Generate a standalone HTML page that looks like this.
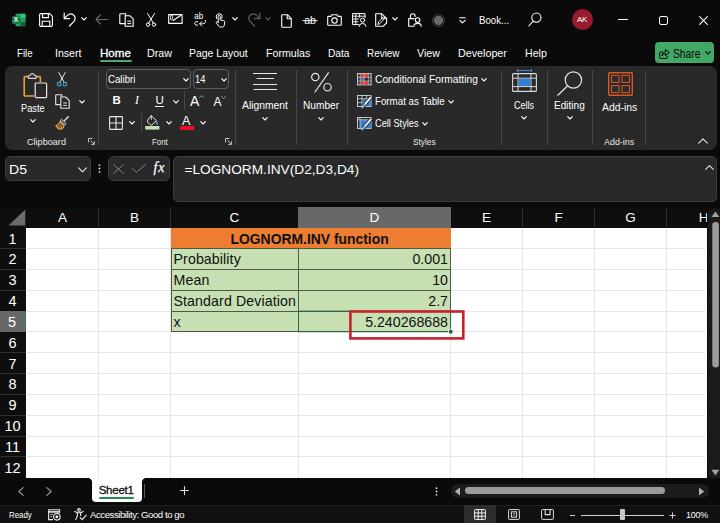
<!DOCTYPE html>
<html lang="en">
<head>
<meta charset="utf-8">
<title>Book1 - Excel</title>
<style>
*{box-sizing:border-box;margin:0;padding:0}
html,body{width:720px;height:523px;overflow:hidden;background:#0a0a0a}
body{position:relative;font-family:"Liberation Sans",sans-serif;color:#fff;font-size:12px}
.abs{position:absolute}
.t{position:absolute;white-space:nowrap;line-height:1;transform-origin:0 50%}
svg{position:absolute;overflow:visible}
/* menu */
.menu{font-size:11.6px;top:47px;color:#fff}
/* ribbon */
#ribbon{position:absolute;left:5px;top:65.5px;width:711.5px;height:84px;background:#292929;border-radius:7px}
.rl{font-size:11px;color:#fff}
.gl{font-size:9.8px;color:#e8e8e8}
.sep{position:absolute;width:1px;background:#474747}
.cb{border:1px solid #5c5c5c;border-radius:4px;background:#292929}
/* formula bar */
.fbox{position:absolute;background:#292929;border:1px solid #3c3c3c;border-radius:5px}
.st{font-size:9.7px;color:#fff}
/* grid */
#grid{position:absolute;left:0;top:207px;width:720px;height:271px;overflow:hidden}
.ch{position:absolute;top:0;height:21px;color:#fff;font-size:13.5px;text-align:center;line-height:22px}
.chs{background:#686868}
.chs1{position:absolute;top:1px;width:1px;height:20px;background:#2e2e2e}
.rh{position:absolute;left:0;width:26px;padding-right:1px;background:#0e0e0e;color:#fff;font-size:14.5px;text-align:center;line-height:23px}
.rhs{background:#686868;border-right:1px solid #2a7a4f}
.rhs1{position:absolute;left:0;width:26px;height:1px;background:#2e2e2e}
.vl{position:absolute;top:21px;width:1px;height:250px;background:#e6e6e6}
.hl{position:absolute;left:26px;height:1px;width:679px;background:#e6e6e6}
.bh{position:absolute;left:171px;width:280px;height:1px;background:#4a5a44}
.bv{position:absolute;top:41px;width:1px;height:84px;background:#4a5a44}
.r{letter-spacing:0 !important}
.cell{position:absolute;font-size:14.2px;color:#111;white-space:nowrap;line-height:1;letter-spacing:0.1px}
</style>
</head>
<body>

<!-- ============ TITLE BAR ============ -->
<div id="titlebar">
  <!-- excel logo -->
  <svg style="left:12px;top:13px" width="14" height="14" viewBox="0 0 14 14">
    <rect x="3.5" y="0.7" width="10" height="12.6" rx="1" fill="#21a366"/>
    <rect x="8.5" y="0.7" width="5" height="4.2" fill="#33c481"/>
    <rect x="3.5" y="4.9" width="5" height="4.2" fill="#107c41"/>
    <rect x="8.5" y="9.1" width="5" height="4.2" fill="#185c37"/>
    <rect x="0" y="3.3" width="7.6" height="7.6" rx="0.8" fill="#107c41"/>
    <text x="3.8" y="9.4" font-size="6.5" font-weight="bold" fill="#fff" text-anchor="middle" font-family="Liberation Sans, sans-serif">X</text>
  </svg>
  <!-- save -->
  <svg style="left:39px;top:13px" width="14" height="14" viewBox="0 0 14 14" fill="none" stroke="#fff" stroke-width="1.1">
    <path d="M0.6 2.1Q0.6 0.6 2.1 0.6H10.6L13.4 3.4V11.9Q13.4 13.4 11.9 13.4H2.1Q0.6 13.4 0.6 11.9Z"/>
    <path d="M3.6 0.8V4.6H9.4V0.8"/>
    <path d="M3.2 13.2V8.2H10.8V13.2"/>
  </svg>
  <!-- undo -->
  <svg style="left:63px;top:12px" width="14" height="15" viewBox="0 0 14 15" fill="none" stroke="#fff" stroke-width="1.2" stroke-linecap="round" stroke-linejoin="round">
    <path d="M1.2 1.2V6.6H6.6"/>
    <path d="M1.4 6.4L4.6 3.2Q7.6 0.6 10.6 3Q13.6 6 10.8 9.6L6.4 14"/>
  </svg>
  <svg style="left:81px;top:17px" width="6" height="4" viewBox="0 0 6 4" fill="none" stroke="#fff" stroke-width="1.1" stroke-linecap="round" stroke-linejoin="round"><path d="M0.7 0.7L3 3L5.3 0.7"/></svg>
  <!-- back arrow (disabled) -->
  <svg style="left:95px;top:14px" width="14" height="11" viewBox="0 0 14 11" fill="none" stroke="#6a6a6a" stroke-width="1.1" stroke-linecap="round" stroke-linejoin="round">
    <path d="M13 5.5H1M5.4 1L1 5.5L5.4 10"/>
  </svg>
  <!-- paste/copy doc -->
  <svg style="left:118.5px;top:13px" width="15" height="14" viewBox="0 0 15 14" fill="none" stroke="#fff" stroke-width="1.1" stroke-linejoin="round">
    <path d="M6 10.6H0.8V1.4Q0.8 0.7 1.5 0.7H6.6V3"/>
    <path d="M6.2 2.8H11L14.2 5.8V13.3H6.2Z" fill="#0a0a0a"/>
    <path d="M8.3 8.2H12.2M8.3 10.6H12.2" stroke-width="1"/>
  </svg>
  <!-- scissors -->
  <svg style="left:146px;top:13px" width="10" height="14" viewBox="0 0 10 14" fill="none" stroke="#fff" stroke-width="1" stroke-linecap="round">
    <path d="M1.6 0.6L7.4 10.2M8.4 0.6L2.6 10.2"/>
    <circle cx="2" cy="11.6" r="1.7"/><circle cx="8" cy="11.6" r="1.7"/>
  </svg>
  <!-- signature / pen image icon -->
  <svg style="left:168px;top:13px" width="15" height="13" viewBox="0 0 15 13" fill="none" stroke="#fff" stroke-width="1.1" stroke-linejoin="round" stroke-linecap="round">
    <path d="M0.7 1.6H14.1V10.4H0.7Z"/>
    <path d="M2.6 6.4V3.4Q2.6 2 3.6 2Q4.6 2 4.6 3.4V5.6Q4.6 7 3.6 7" stroke-width="0.9"/>
    <path d="M5.2 7.4L12.6 2.4" stroke-width="1.2"/>
  </svg>
  <!-- ab translate -->
  <svg style="left:193px;top:13px" width="14" height="14" viewBox="0 0 14 14" fill="none" stroke="#fff" stroke-width="0.95" stroke-linecap="round" stroke-linejoin="round">
    <text x="1.2" y="6.4" font-size="8.2" fill="#fff" stroke="none" font-family="Liberation Sans, sans-serif">ab</text>
    <path d="M4.6 8.6Q2 8 1.6 10.4Q2 12.8 4.6 12.2"/>
    <path d="M12.4 7.4Q13.2 10.6 9.6 10.8H6.8M8.8 8.6L6.6 10.8L8.8 13"/>
  </svg>
  <!-- touch -->
  <svg style="left:213.5px;top:12.5px" width="12" height="15" viewBox="0 0 12 15" fill="none" stroke="#fff" stroke-width="1" stroke-linecap="round" stroke-linejoin="round">
    <path d="M4.2 9.4V3.4Q4.2 2.3 5.2 2.3Q6.2 2.3 6.2 3.4V7L9.6 7.6Q10.8 7.9 10.7 9.2L10.2 12.6Q10 14 8.6 14H6.2Q5.2 14 4.6 13L2.4 9.8Q2 9 2.8 8.6Q3.4 8.4 4.2 9.4"/>
    <path d="M2.6 5.6Q1.2 2.6 3.4 1.2Q5.2 0.2 7 1.2Q9 2.6 7.8 5.4"/>
  </svg>
  <svg style="left:232px;top:17px" width="6" height="4" viewBox="0 0 6 4" fill="none" stroke="#fff" stroke-width="1.1" stroke-linecap="round" stroke-linejoin="round"><path d="M0.7 0.7L3 3L5.3 0.7"/></svg>
  <!-- redo (disabled) -->
  <svg style="left:247px;top:12px" width="14" height="15" viewBox="0 0 14 15" fill="none" stroke="#5e5e5e" stroke-width="1.2" stroke-linecap="round" stroke-linejoin="round">
    <path d="M12.8 1.2V6.6H7.4"/>
    <path d="M12.6 6.4L9.4 3.2Q6.4 0.6 3.4 3Q0.4 6 3.2 9.6L7.6 14"/>
  </svg>
  <svg style="left:264.5px;top:17px" width="6" height="4" viewBox="0 0 6 4" fill="none" stroke="#5e5e5e" stroke-width="1.1" stroke-linecap="round" stroke-linejoin="round"><path d="M0.7 0.7L3 3L5.3 0.7"/></svg>
  <!-- new doc -->
  <svg style="left:280.5px;top:13.5px" width="11" height="14" viewBox="0 0 11 14" fill="none" stroke="#fff" stroke-width="1.1" stroke-linejoin="round">
    <path d="M0.7 1.6Q0.7 0.7 1.6 0.7H6.4L10.3 4.6V12.4Q10.3 13.3 9.4 13.3H1.6Q0.7 13.3 0.7 12.4Z"/>
    <path d="M6.2 0.9V4.8H10.1"/>
  </svg>
  <!-- strikethrough ab -->
  <svg style="left:302px;top:14px" width="16" height="12" viewBox="0 0 16 12">
    <text x="2.2" y="9.8" font-size="10.5" fill="#fff" font-family="Liberation Sans, sans-serif">ab</text>
    <path d="M0.4 6.6H15.6" stroke="#fff" stroke-width="0.9"/>
  </svg>
  <!-- camera -->
  <svg style="left:327px;top:13.5px" width="15" height="12" viewBox="0 0 15 12" fill="none" stroke="#fff" stroke-width="1.1" stroke-linejoin="round">
    <path d="M0.7 3.2Q0.7 2.4 1.5 2.4H4L5 0.7H10L11 2.4H13.5Q14.3 2.4 14.3 3.2V10.6Q14.3 11.3 13.5 11.3H1.5Q0.7 11.3 0.7 10.6Z"/>
    <circle cx="7.5" cy="6.6" r="2.7"/>
  </svg>
  <!-- form / table person -->
  <svg style="left:352px;top:13px" width="15" height="14" viewBox="0 0 15 14" fill="none" stroke="#fff" stroke-width="1" stroke-linejoin="round" stroke-linecap="round">
    <path d="M7 11.6H0.6V0.6H13V4.6"/>
    <path d="M0.6 3.2H13M0.6 6H6.6M0.6 8.8H6M3.8 0.6V11.6M7.6 0.6V4.4" stroke-width="0.9"/>
    <circle cx="10.6" cy="7.2" r="2.1"/>
    <path d="M7.2 13.4Q7.4 10.4 10.6 10.4Q13.8 10.4 14 13.4"/>
  </svg>
  <!-- doc with pen -->
  <svg style="left:374.5px;top:13px" width="13" height="14" viewBox="0 0 13 14" fill="none" stroke="#fff" stroke-width="1.1" stroke-linejoin="round" stroke-linecap="round">
    <path d="M0.7 0.7H6.6L11.6 5.4V10L8 13.3H0.7Z"/>
    <path d="M6.4 0.9V5.6H11.2" stroke-width="0.9"/>
    <path d="M3 11.2L3.6 8.8L8.6 3.6L10 5L5 10.4Z" stroke-width="0.9"/>
  </svg>
  <svg style="left:392px;top:17px" width="6" height="4" viewBox="0 0 6 4" fill="none" stroke="#fff" stroke-width="1.1" stroke-linecap="round" stroke-linejoin="round"><path d="M0.7 0.7L3 3L5.3 0.7"/></svg>
  <!-- lock person -->
  <svg style="left:408px;top:13px" width="14" height="14" viewBox="0 0 14 14" fill="none" stroke="#fff" stroke-width="1.1" stroke-linejoin="round" stroke-linecap="round">
    <path d="M2.4 5.4V3.4Q2.4 0.7 4.8 0.7Q7.2 0.7 7.2 3.4"/>
    <path d="M5.4 13.3H0.7V5.6H6"/>
    <circle cx="9.6" cy="7" r="2.3"/>
    <path d="M6 13.3Q6 10.4 9.6 10.4Q13.2 10.4 13.2 13.3"/>
  </svg>
  <!-- record -->
  <svg style="left:431.5px;top:13.5px" width="13" height="13" viewBox="0 0 13 13"><circle cx="6.5" cy="6.5" r="6" fill="none" stroke="#4a4a4a" stroke-width="0.9"/><circle cx="6.5" cy="6.5" r="4.7" fill="#6a6a6a"/></svg>
  <!-- customize QAT -->
  <svg style="left:459px;top:16.5px" width="7" height="7" viewBox="0 0 7 7" fill="none" stroke="#fff" stroke-width="1.1" stroke-linecap="round" stroke-linejoin="round"><path d="M0.8 0.8H6.2"/><path d="M0.9 3.4L3.5 5.9L6.1 3.4"/></svg>
  <span class="t" style="left:479px;top:15px;font-size:11.5px;transform:scaleX(0.843)" id="book">Book...</span>
  <!-- search -->
  <svg style="left:528px;top:12px" width="14" height="15" viewBox="0 0 14 15" fill="none" stroke="#fff" stroke-width="1.1" stroke-linecap="round"><circle cx="8.4" cy="5.6" r="4.6"/><path d="M5.2 9.2L0.8 14"/></svg>
  <!-- avatar -->
  <div class="abs" style="left:571.5px;top:9px;width:21px;height:21px;border-radius:50%;background:#951c2e"></div>
  <span class="t" style="left:577px;top:16px;font-size:8px;letter-spacing:-0.3px" id="ak">AK</span>
  <!-- window controls -->
  <div class="abs" style="left:618px;top:18.5px;width:9.5px;height:1.2px;background:#fff"></div>
  <div class="abs" style="left:658.5px;top:15.5px;width:9px;height:9px;border:1.1px solid #fff;border-radius:2px"></div>
  <svg style="left:699px;top:15.5px" width="9" height="9" viewBox="0 0 9 9" stroke="#fff" stroke-width="1.1" stroke-linecap="round"><path d="M0.6 0.6L8.4 8.4M8.4 0.6L0.6 8.4"/></svg>
</div>

<!-- ============ MENU ============ -->
<div id="menu">
  <span class="t menu" style="left:16.5px;transform:scaleX(0.837)" id="m1">File</span>
  <span class="t menu" style="left:55.4px;transform:scaleX(0.912)" id="m2">Insert</span>
  <span class="t menu" style="left:100px;-webkit-text-stroke:0.3px #fff" id="m3">Home</span>
  <div class="abs" style="left:100px;top:60px;width:31.5px;height:2px;background:#4ea86f;border-radius:1px"></div>
  <span class="t menu" style="left:147px;transform:scaleX(0.929)" id="m4">Draw</span>
  <span class="t menu" style="left:189px;transform:scaleX(0.902)" id="m5">Page Layout</span>
  <span class="t menu" style="left:266.4px;transform:scaleX(0.918)" id="m6">Formulas</span>
  <span class="t menu" style="left:327.5px;transform:scaleX(0.879)" id="m7">Data</span>
  <span class="t menu" style="left:367px;transform:scaleX(0.856)" id="m8">Review</span>
  <span class="t menu" style="left:417px;transform:scaleX(0.92)" id="m9">View</span>
  <span class="t menu" style="left:457.5px;transform:scaleX(0.925)" id="m10">Developer</span>
  <span class="t menu" style="left:525px;transform:scaleX(0.917)" id="m11">Help</span>
  <div class="abs" style="left:655px;top:42px;width:59px;height:20.5px;border-radius:4px;background:#41a866"></div>
  <svg style="left:658.5px;top:48.5px" width="11" height="10" viewBox="0 0 11 10" fill="none" stroke="#0a0a0a" stroke-width="1" stroke-linejoin="round" stroke-linecap="round">
    <path d="M3.4 3H1.6Q0.6 3 0.6 4V8.4Q0.6 9.4 1.6 9.4H7.4Q8.4 9.4 8.4 8.4V7.4"/>
    <path d="M6.6 0.6L10.4 3.6L6.6 6.6V4.8Q4 4.6 2.8 7Q3 3 6.6 2.6Z"/>
  </svg>
  <span class="t" style="left:673px;top:47.5px;font-size:12px;color:#0a0a0a;transform:scaleX(0.858)" id="share">Share</span>
  <svg style="left:704.5px;top:51px" width="6" height="4" viewBox="0 0 6 4" fill="none" stroke="#0a0a0a" stroke-width="1.1" stroke-linecap="round" stroke-linejoin="round"><path d="M0.7 0.7L3 3L5.3 0.7"/></svg>
</div>

<!-- ============ RIBBON ============ -->
<div id="ribbon"></div>
<div id="rib">
  <!-- Clipboard group -->
  <svg style="left:22.5px;top:73px" width="25" height="26" viewBox="0 0 25 26" fill="none">
    <path d="M6 3.6H2.2Q1.2 3.6 1.2 4.6V22Q1.2 23 2.2 23H11" stroke="#e8a33d" stroke-width="1.6"/>
    <path d="M12.6 3.6H16.4Q17.4 3.6 17.4 4.6V9" stroke="#e8a33d" stroke-width="1.6"/>
    <path d="M5.6 5.4V3Q5.6 2.2 6.4 2.2H7.4Q7.6 0.6 9.3 0.6Q11 0.6 11.2 2.2H12.2Q13 2.2 13 3V5.4Z" stroke="#d6d6d6" stroke-width="1.1" fill="#292929"/>
    <rect x="12.2" y="10" width="11.4" height="14.6" rx="0.8" stroke="#e6e6e6" stroke-width="1.2" fill="#292929"/>
  </svg>
  <span class="t rl" style="left:21.4px;top:102.5px;transform:scaleX(0.839)" id="paste">Paste</span>
  <svg style="left:29.5px;top:118.5px" width="6" height="4" viewBox="0 0 6 4" fill="none" stroke="#fff" stroke-width="1.1" stroke-linecap="round" stroke-linejoin="round"><path d="M0.7 0.7L3 3L5.3 0.7"/></svg>
  <!-- cut -->
  <svg style="left:57px;top:72px" width="10" height="15" viewBox="0 0 10 15" fill="none" stroke-linecap="round">
    <path d="M1.8 0.6L7.2 10.4M8.2 0.6L2.8 10.4" stroke="#e6e6e6" stroke-width="1"/>
    <circle cx="2.1" cy="12.2" r="1.8" stroke="#4da3e0" stroke-width="1.1"/><circle cx="7.9" cy="12.2" r="1.8" stroke="#4da3e0" stroke-width="1.1"/>
  </svg>
  <!-- copy -->
  <svg style="left:55px;top:93.5px" width="15" height="15" viewBox="0 0 15 15" fill="none" stroke="#e6e6e6" stroke-width="1.1" stroke-linejoin="round">
    <path d="M5.6 10.6H0.7V1.4Q0.7 0.7 1.4 0.7H6.8V3"/>
    <path d="M5.8 3H10.6L14.2 6.4V14.2H5.8Z" fill="#292929"/>
    <path d="M8.2 9H12M8.2 11.4H12" stroke-width="0.9"/>
  </svg>
  <svg style="left:79px;top:99.5px" width="6" height="4" viewBox="0 0 6 4" fill="none" stroke="#fff" stroke-width="1.1" stroke-linecap="round" stroke-linejoin="round"><path d="M0.7 0.7L3 3L5.3 0.7"/></svg>
  <!-- format painter -->
  <svg style="left:55px;top:116px" width="15" height="14" viewBox="0 0 15 14" fill="none" stroke-linejoin="round" stroke-linecap="round">
    <path d="M9.4 4.8L13.2 0.8" stroke="#e6e6e6" stroke-width="1.3"/>
    <path d="M6.8 3.6L11 7.6L9.6 9L5.4 5Z" stroke="#e6e6e6" stroke-width="1" fill="#292929"/>
    <path d="M5 5.6L9 9.6Q8.6 12.8 5.2 13.2Q2.4 12.6 0.8 10Q3.6 8.8 5 5.6Z" stroke="#e8a33d" stroke-width="1.1" fill="#e8a33d" fill-opacity="0.35"/>
    <path d="M3.4 10.8L4.6 12.4M5.4 9.6L6.6 11.6" stroke="#e8a33d" stroke-width="0.8"/>
  </svg>
  <span class="t gl" style="left:27px;top:136.5px;transform:scaleX(0.929)" id="g1">Clipboard</span>
  <svg style="left:88px;top:138px" width="7" height="7" viewBox="0 0 7 7" fill="none" stroke="#d0d0d0" stroke-width="0.9"><path d="M0.5 4.5V0.5H4.5"/><path d="M2.6 2.6L6.2 6.2M6.4 3.2V6.4H3.2"/></svg>
  <div class="sep" style="left:98px;top:70px;height:75px"></div>

  <!-- Font group -->
  <div class="abs cb" style="left:105.5px;top:68.5px;width:85.5px;height:20.5px"></div>
  <span class="t" style="left:107.5px;top:74px;font-size:11px;transform:scaleX(0.88)" id="fname">Calibri</span>
  <svg style="left:182.5px;top:77.5px" width="6" height="4" viewBox="0 0 6 4" fill="none" stroke="#fff" stroke-width="1.1" stroke-linecap="round" stroke-linejoin="round"><path d="M0.7 0.7L3 3L5.3 0.7"/></svg>
  <div class="abs cb" style="left:192.5px;top:68.5px;width:36.5px;height:20.5px"></div>
  <span class="t" style="left:195px;top:74px;font-size:11px;transform:scaleX(0.84)" id="fsize">14</span>
  <svg style="left:221px;top:77.5px" width="6" height="4" viewBox="0 0 6 4" fill="none" stroke="#fff" stroke-width="1.1" stroke-linecap="round" stroke-linejoin="round"><path d="M0.7 0.7L3 3L5.3 0.7"/></svg>
  <span class="t" style="left:112.5px;top:95px;font-size:11.5px;font-weight:bold" id="bb">B</span>
  <span class="t" style="left:135px;top:95px;font-size:11.5px;font-style:italic;font-family:'Liberation Serif',serif" id="ii">I</span>
  <span class="t" style="left:155.5px;top:95px;font-size:11.5px" id="uu">U</span>
  <div class="abs" style="left:155px;top:106px;width:8.5px;height:1px;background:#fff"></div>
  <svg style="left:172.5px;top:99.5px" width="6" height="4" viewBox="0 0 6 4" fill="none" stroke="#fff" stroke-width="1.1" stroke-linecap="round" stroke-linejoin="round"><path d="M0.7 0.7L3 3L5.3 0.7"/></svg>
  <div class="sep" style="left:184px;top:91px;height:19px"></div>
  <span class="t" style="left:190px;top:93.5px;font-size:14px" id="agrow">A</span>
  <svg style="left:199px;top:95px" width="5" height="3" viewBox="0 0 5 3" fill="none" stroke="#6cb8ee" stroke-width="0.9" stroke-linecap="round"><path d="M0.5 2.5L2.5 0.5L4.5 2.5"/></svg>
  <span class="t" style="left:213.5px;top:95.5px;font-size:12px" id="ashrink">A</span>
  <svg style="left:221px;top:95.5px" width="5" height="3" viewBox="0 0 5 3" fill="none" stroke="#6cb8ee" stroke-width="0.9" stroke-linecap="round"><path d="M0.5 0.5L2.5 2.5L4.5 0.5"/></svg>
  <!-- borders -->
  <svg style="left:108.5px;top:115.5px" width="14" height="14" viewBox="0 0 14 14" fill="none" stroke="#e6e6e6" stroke-width="1.1"><rect x="0.6" y="0.6" width="12.8" height="12.8" rx="0.6"/><path d="M7 0.6V13.4M0.6 7H13.4"/></svg>
  <svg style="left:128.5px;top:121px" width="6" height="4" viewBox="0 0 6 4" fill="none" stroke="#fff" stroke-width="1.1" stroke-linecap="round" stroke-linejoin="round"><path d="M0.7 0.7L3 3L5.3 0.7"/></svg>
  <div class="sep" style="left:140.5px;top:112.5px;height:20px"></div>
  <!-- fill colour -->
  <svg style="left:145px;top:115px" width="15" height="15" viewBox="0 0 15 15" fill="none" stroke-linejoin="round" stroke-linecap="round">
    <path d="M6.4 0.8L11.4 5.6L7 9.8Q6.2 10.4 5.4 9.8L2.6 7Q2 6.2 2.6 5.4Z" stroke="#e6e6e6" stroke-width="1"/>
    <path d="M6.4 0.8V4.4" stroke="#e6e6e6" stroke-width="0.9"/>
    <path d="M11.6 6.6Q13.4 8.8 12.2 9.6Q11 9.8 11.6 6.6Z" stroke="#4da3e0" stroke-width="0.9" fill="#4da3e0"/>
    <rect x="0.2" y="11" width="14.2" height="3.6" fill="#c6e0b4"/>
  </svg>
  <svg style="left:165.5px;top:121px" width="6" height="4" viewBox="0 0 6 4" fill="none" stroke="#fff" stroke-width="1.1" stroke-linecap="round" stroke-linejoin="round"><path d="M0.7 0.7L3 3L5.3 0.7"/></svg>
  <!-- font colour -->
  <span class="t" style="left:182px;top:114.5px;font-size:12.5px" id="fca">A</span>
  <div class="abs" style="left:179.5px;top:126px;width:14.5px;height:3.6px;background:#e81123"></div>
  <svg style="left:199.5px;top:121px" width="6" height="4" viewBox="0 0 6 4" fill="none" stroke="#fff" stroke-width="1.1" stroke-linecap="round" stroke-linejoin="round"><path d="M0.7 0.7L3 3L5.3 0.7"/></svg>
  <span class="t gl" style="left:152px;top:136.5px;transform:scaleX(0.801)" id="g2">Font</span>
  <svg style="left:225px;top:138px" width="7" height="7" viewBox="0 0 7 7" fill="none" stroke="#d0d0d0" stroke-width="0.9"><path d="M0.5 4.5V0.5H4.5"/><path d="M2.6 2.6L6.2 6.2M6.4 3.2V6.4H3.2"/></svg>
  <div class="sep" style="left:235px;top:70px;height:75px"></div>

  <!-- Alignment -->
  <svg style="left:253px;top:72px" width="24" height="20" viewBox="0 0 24 20" stroke="#e6e6e6" stroke-width="1.1"><path d="M0 1.5H24M3.6 6.5H21M0 12.5H24M0.6 17.5H24"/></svg>
  <span class="t rl" style="left:242px;top:100px;transform:scaleX(0.939)" id="align">Alignment</span>
  <svg style="left:261.5px;top:116.5px" width="6" height="4" viewBox="0 0 6 4" fill="none" stroke="#fff" stroke-width="1.1" stroke-linecap="round" stroke-linejoin="round"><path d="M0.7 0.7L3 3L5.3 0.7"/></svg>
  <div class="sep" style="left:295.5px;top:70px;height:75px"></div>
  <!-- Number -->
  <svg style="left:311px;top:72px" width="21" height="21" viewBox="0 0 21 21" fill="none" stroke="#e6e6e6" stroke-width="1.2" stroke-linecap="round"><circle cx="4.3" cy="5" r="3.7"/><circle cx="16.5" cy="15.2" r="3.7"/><path d="M17.4 0.8L4 20"/></svg>
  <span class="t rl" style="left:303.4px;top:100px;transform:scaleX(0.923)" id="number">Number</span>
  <svg style="left:318px;top:116.5px" width="6" height="4" viewBox="0 0 6 4" fill="none" stroke="#fff" stroke-width="1.1" stroke-linecap="round" stroke-linejoin="round"><path d="M0.7 0.7L3 3L5.3 0.7"/></svg>
  <div class="sep" style="left:346.5px;top:70px;height:75px"></div>

  <!-- Styles -->
  <svg style="left:357px;top:72.5px" width="15" height="13" viewBox="0 0 15 13" fill="none">
    <rect x="0.5" y="0.5" width="13.6" height="11.4" fill="#3a3a3a" stroke="#d8d8d8" stroke-width="0.9"/>
    <rect x="3.4" y="0.9" width="7.8" height="3.4" fill="#e23b3b"/><rect x="3.4" y="4.6" width="3.8" height="3.2" fill="#3a78d8"/><rect x="7.4" y="4.6" width="3.8" height="3.2" fill="#2a2a2a"/><rect x="3.4" y="8.1" width="7.8" height="3.4" fill="#e23b3b"/>
    <path d="M0.5 4.4H14M0.5 8H14M3.2 0.5V12M11.4 0.5V12M7.3 0.5V12" stroke="#c8c8c8" stroke-width="0.6"/>
  </svg>
  <span class="t rl" style="left:374.5px;top:74px;transform:scaleX(0.929)" id="cf">Conditional Formatting</span>
  <svg style="left:481px;top:77.5px" width="6" height="4" viewBox="0 0 6 4" fill="none" stroke="#fff" stroke-width="1.1" stroke-linecap="round" stroke-linejoin="round"><path d="M0.7 0.7L3 3L5.3 0.7"/></svg>
  <svg style="left:357px;top:95px" width="15" height="13" viewBox="0 0 15 13" fill="none">
    <rect x="0.5" y="0.5" width="13.6" height="11" fill="#292929" stroke="#d8d8d8" stroke-width="0.9"/>
    <path d="M0.5 3.8H14M0.5 7.6H14M5 0.5V11.5M9.6 0.5V11.5" stroke="#d8d8d8" stroke-width="0.8"/>
    <rect x="5.4" y="4.2" width="8.3" height="6.9" fill="#2f7fd6"/>
    <path d="M14.4 1.6L6.2 11.4" stroke="#292929" stroke-width="3.6"/><path d="M13.8 2.4L8 9.2" stroke="#f0f0f0" stroke-width="1.9" stroke-linecap="round"/><path d="M7.4 9.8L5.2 12.4" stroke="#7cc0f5" stroke-width="1.9" stroke-linecap="round"/>
  </svg>
  <span class="t rl" style="left:374.5px;top:96px;transform:scaleX(0.886)" id="fat">Format as Table</span>
  <svg style="left:447.5px;top:99.5px" width="6" height="4" viewBox="0 0 6 4" fill="none" stroke="#fff" stroke-width="1.1" stroke-linecap="round" stroke-linejoin="round"><path d="M0.7 0.7L3 3L5.3 0.7"/></svg>
  <svg style="left:357px;top:117px" width="15" height="13" viewBox="0 0 15 13" fill="none">
    <rect x="0.5" y="0.5" width="13.6" height="11" fill="#292929" stroke="#d8d8d8" stroke-width="0.9"/>
    <rect x="3" y="2.8" width="10.7" height="8.3" fill="#2f7fd6"/>
    <path d="M0.5 2.8H14M3 0.5V11.5" stroke="#d8d8d8" stroke-width="0.8"/>
    <path d="M14.4 1.6L6.2 11.4" stroke="#292929" stroke-width="3.6"/><path d="M13.8 2.4L8 9.2" stroke="#f0f0f0" stroke-width="1.9" stroke-linecap="round"/><path d="M7.4 9.8L5.2 12.4" stroke="#7cc0f5" stroke-width="1.9" stroke-linecap="round"/>
  </svg>
  <span class="t rl" style="left:374.5px;top:118px;transform:scaleX(0.839)" id="cs">Cell Styles</span>
  <svg style="left:421.5px;top:121.5px" width="6" height="4" viewBox="0 0 6 4" fill="none" stroke="#fff" stroke-width="1.1" stroke-linecap="round" stroke-linejoin="round"><path d="M0.7 0.7L3 3L5.3 0.7"/></svg>
  <span class="t gl" style="left:412.5px;top:136.5px;transform:scaleX(0.846)" id="g3">Styles</span>
  <div class="sep" style="left:501px;top:70px;height:75px"></div>

  <!-- Cells -->
  <svg style="left:512px;top:69px" width="25" height="23" viewBox="0 0 25 23" fill="none">
    <path d="M5.6 1.6H19.4M5.6 0.2V3M19.4 0.2V3" stroke="#4da3e0" stroke-width="0.9"/>
    <rect x="0.6" y="4.6" width="23.8" height="17.8" rx="1" stroke="#d8d8d8" stroke-width="1.1"/>
    <path d="M0.6 9.2H24.4M0.6 17.6H24.4M6 4.6V22.4M19 4.6V22.4" stroke="#d8d8d8" stroke-width="1"/>
    <rect x="6.6" y="9.8" width="11.8" height="7.2" fill="#2f7fd6"/>
  </svg>
  <span class="t rl" style="left:514.3px;top:100px;transform:scaleX(0.817)" id="cells">Cells</span>
  <svg style="left:520.5px;top:116px" width="6" height="4" viewBox="0 0 6 4" fill="none" stroke="#fff" stroke-width="1.1" stroke-linecap="round" stroke-linejoin="round"><path d="M0.7 0.7L3 3L5.3 0.7"/></svg>
  <div class="sep" style="left:547px;top:70px;height:75px"></div>
  <!-- Editing -->
  <svg style="left:557px;top:70.5px" width="26" height="25" viewBox="0 0 26 25" fill="none" stroke="#e6e6e6" stroke-width="1.2" stroke-linecap="round"><circle cx="16.4" cy="9" r="8.2"/><path d="M10.4 15L0.8 24.2"/></svg>
  <span class="t rl" style="left:554.3px;top:100px;transform:scaleX(0.915)" id="editing">Editing</span>
  <svg style="left:566.5px;top:116px" width="6" height="4" viewBox="0 0 6 4" fill="none" stroke="#fff" stroke-width="1.1" stroke-linecap="round" stroke-linejoin="round"><path d="M0.7 0.7L3 3L5.3 0.7"/></svg>
  <div class="sep" style="left:592px;top:70px;height:75px"></div>
  <!-- Add-ins -->
  <svg style="left:607.5px;top:71.5px" width="25" height="24" viewBox="0 0 25 24" fill="none" stroke="#d4582a" stroke-width="1.1"><rect x="0.7" y="0.7" width="23.6" height="22.6" rx="1" stroke-width="1.4"/><rect x="3.6" y="3.4" width="7.4" height="7" /><rect x="14" y="3.4" width="7.4" height="7"/><rect x="3.6" y="13.6" width="7.4" height="7"/><rect x="14" y="13.6" width="7.4" height="7"/></svg>
  <span class="t rl" style="left:601.9px;top:101.5px;transform:scaleX(0.942)" id="addins">Add-ins</span>
  <span class="t gl" style="left:603.8px;top:136.5px;transform:scaleX(0.909)" id="g4">Add-ins</span>
  <div class="sep" style="left:645px;top:70px;height:75px"></div>
  <svg style="left:698px;top:138px" width="10" height="6" viewBox="0 0 10 6" fill="none" stroke="#e6e6e6" stroke-width="1.1" stroke-linecap="round" stroke-linejoin="round"><path d="M0.7 5.2L5 0.9L9.3 5.2"/></svg>
</div>

<!-- ============ FORMULA BAR ============ -->
<div id="fbar">
  <div class="fbox" style="left:5px;top:156px;width:86px;height:25px"></div>
  <span class="t" style="left:8.5px;top:162.5px;font-size:13.7px;transform:scaleX(1.031)" id="nb">D5</span>
  <svg style="left:77.5px;top:167px" width="9" height="6" viewBox="0 0 9 6" fill="none" stroke="#e6e6e6" stroke-width="1.1" stroke-linecap="round" stroke-linejoin="round"><path d="M0.7 0.8L4.5 4.8L8.3 0.8"/></svg>
  <svg style="left:97.7px;top:164px" width="3" height="9" viewBox="0 0 3 9" fill="#e0e0e0"><circle cx="1.5" cy="1.1" r="0.95"/><circle cx="1.5" cy="4.5" r="0.95"/><circle cx="1.5" cy="7.9" r="0.95"/></svg>
  <div class="fbox" style="left:107.5px;top:156px;width:62.5px;height:25px"></div>
  <svg style="left:113px;top:163.5px" width="11" height="10" viewBox="0 0 11 10" fill="none" stroke="#858585" stroke-width="1" stroke-linecap="round"><path d="M0.6 0.6L10.4 9.4M10.4 0.6L0.6 9.4"/></svg>
  <svg style="left:131.5px;top:164px" width="14" height="9" viewBox="0 0 14 9" fill="none" stroke="#858585" stroke-width="1" stroke-linecap="round" stroke-linejoin="round"><path d="M0.6 4.6L4.4 8.4L13.4 0.6"/></svg>
  <span class="t" style="left:153.5px;top:160.5px;font-size:14px;font-style:italic;font-family:'Liberation Serif',serif;-webkit-text-stroke:0.25px #fff;letter-spacing:0.8px" id="fx">fx</span>
  <div class="fbox" style="left:173px;top:156px;width:544px;height:46px"></div>
  <span class="t" style="left:184.4px;top:162.5px;font-size:13.7px" id="formula">=LOGNORM.INV(D2,D3,D4)</span>
  <svg style="left:705px;top:165px" width="9" height="5" viewBox="0 0 9 5" fill="none" stroke="#e6e6e6" stroke-width="1.1" stroke-linecap="round" stroke-linejoin="round"><path d="M0.7 4.4L4.5 0.7L8.3 4.4"/></svg>
</div>

<!-- ============ GRID ============ -->
<div id="grid">
  <div class="abs" style="left:0;top:0;width:707px;height:21px;background:#0e0e0e"></div>
  <div class="abs" style="left:26px;top:20.5px;width:681px;height:250.5px;background:#fff"></div>
  <svg style="left:8px;top:2px" width="18" height="17" viewBox="0 0 18 17"><path d="M17.3 0.5V16.5H0.5Z" fill="#6b6b6b"/></svg>
  <div class="ch" style="left:26.5px;width:72px">A</div>
  <div class="ch" style="left:98.5px;width:72px">B</div>
  <div class="ch" style="left:170.5px;width:127.5px">C</div>
  <div class="ch chs" style="left:298px;width:152.5px">D</div>
  <div class="ch" style="left:450.5px;width:72px">E</div>
  <div class="ch" style="left:522.5px;width:72px">F</div>
  <div class="ch" style="left:594.5px;width:72px">G</div>
  <div class="ch" style="left:666.5px;width:40.5px;overflow:hidden;text-align:left;padding-left:32.3px">H</div>
  <div class="chs1" style="left:98px"></div>
  <div class="chs1" style="left:170px"></div>
  <div class="chs1" style="left:522px"></div>
  <div class="chs1" style="left:594px"></div>
  <div class="chs1" style="left:666px"></div>
  <div class="rh" style="top:20.5px;height:20.8px">1</div>
  <div class="rh" style="top:41.3px;height:20.9px">2</div>
  <div class="rh" style="top:62.2px;height:20.8px">3</div>
  <div class="rh" style="top:83px;height:20.8px">4</div>
  <div class="rh rhs" style="top:103.8px;height:20.9px">5</div>
  <div class="rh" style="top:124.7px;height:20.8px">6</div>
  <div class="rh" style="top:145.5px;height:20.8px">7</div>
  <div class="rh" style="top:166.3px;height:20.9px">8</div>
  <div class="rh" style="top:187.2px;height:20.8px">9</div>
  <div class="rh" style="top:208px;height:20.8px">10</div>
  <div class="rh" style="top:228.8px;height:20.9px">11</div>
  <div class="rh" style="top:249.7px;height:20.8px">12</div>
  <div class="rhs1" style="top:41px"></div>
  <div class="rhs1" style="top:62px"></div>
  <div class="rhs1" style="top:83px"></div>
  <div class="rhs1" style="top:145px"></div>
  <div class="rhs1" style="top:166px"></div>
  <div class="rhs1" style="top:187px"></div>
  <div class="rhs1" style="top:208px"></div>
  <div class="rhs1" style="top:229px"></div>
  <div class="rhs1" style="top:249px"></div>
  <div class="vl" style="left:98px"></div>
  <div class="vl" style="left:170px"></div>
  <div class="vl" style="left:298px"></div>
  <div class="vl" style="left:450px"></div>
  <div class="vl" style="left:522px"></div>
  <div class="vl" style="left:594px"></div>
  <div class="vl" style="left:666px"></div>
  <div class="hl" style="top:41px"></div>
  <div class="hl" style="top:62px"></div>
  <div class="hl" style="top:83px"></div>
  <div class="hl" style="top:104px"></div>
  <div class="hl" style="top:124px"></div>
  <div class="hl" style="top:145px"></div>
  <div class="hl" style="top:166px"></div>
  <div class="hl" style="top:187px"></div>
  <div class="hl" style="top:208px"></div>
  <div class="hl" style="top:229px"></div>
  <div class="hl" style="top:249px"></div>

  <!-- data cells -->
  <div class="abs" style="left:171px;top:21px;width:280px;height:21px;background:#ed7d31"></div>
  <div class="abs" style="left:171px;top:41px;width:280px;height:84px;background:#c6e0b4"></div>
  <div class="bh" style="top:41px"></div>
  <div class="bh" style="top:62px"></div>
  <div class="bh" style="top:83px"></div>
  <div class="bh" style="top:104px"></div>
  <div class="bh" style="top:124px"></div>
  <div class="bv" style="left:171px"></div>
  <div class="bv" style="left:298px"></div>
  <div class="bv" style="left:450px"></div>
  <span class="cell" style="left:230.5px;top:26px;font-weight:bold;font-size:13.9px;letter-spacing:0" id="ttl">LOGNORM.INV function</span>
  <span class="cell" style="left:173.5px;top:45px" id="c2">Probability</span>
  <span class="cell" style="left:173.5px;top:66px" id="c3">Mean</span>
  <span class="cell" style="left:173.5px;top:87px" id="c4">Standard Deviation</span>
  <span class="cell" style="left:173.5px;top:108px" id="c5">x</span>
  <span class="cell r" style="right:272px;top:45px" id="d2">0.001</span>
  <span class="cell r" style="right:272px;top:66px" id="d3">10</span>
  <span class="cell r" style="right:272px;top:87px" id="d4">2.7</span>
  <span class="cell r" style="right:272px;top:108px" id="d5">5.240268688</span>
  <!-- selection -->
  <svg style="left:290px;top:95px" width="190" height="50" viewBox="290 95 190 50" fill="none">
    <rect x="298.5" y="104" width="152" height="20.8" stroke="#1e6e42" stroke-opacity="0.8" stroke-width="1"/>
    <rect x="448.3" y="122.4" width="4.6" height="4.6" fill="#fff"/>
    <rect x="449" y="123" width="3.5" height="3.5" fill="#1e6b45"/>
    <rect x="350.4" y="104.5" width="112.9" height="26.9" stroke="#c9202d" stroke-width="2.6"/>
  </svg>
  <!-- vertical scrollbar -->
  <div class="abs" style="left:707px;top:0;width:13px;height:271px;background:#0a0a0a"></div>
  <div class="abs" style="left:708px;top:1px;width:14px;height:272px;background:#1a1a1a;border-radius:7px"></div>
  <svg style="left:707px;top:0" width="13" height="271" viewBox="0 0 13 271">
    <path d="M4.4 10L8.4 4.4L12.4 10Z" fill="#a0a0a0"/>
    <rect x="5.3" y="15" width="6.6" height="145.6" rx="3.3" fill="#9b9b9b"/>
    <path d="M4.4 262.8L8.4 268.4L12.4 262.8Z" fill="#a0a0a0"/>
  </svg>
</div>


<!-- ============ SHEET TABS ============ -->
<div id="tabs">
  <svg style="left:17.5px;top:486.5px" width="6" height="9" viewBox="0 0 6 9" fill="none" stroke="#9a9a9a" stroke-width="1.1" stroke-linecap="round" stroke-linejoin="round"><path d="M5.2 0.7L0.8 4.5L5.2 8.3"/></svg>
  <svg style="left:45.5px;top:486.5px" width="6" height="9" viewBox="0 0 6 9" fill="none" stroke="#9a9a9a" stroke-width="1.1" stroke-linecap="round" stroke-linejoin="round"><path d="M0.8 0.7L5.2 4.5L0.8 8.3"/></svg>
  <div class="abs" style="left:91.5px;top:478px;width:50px;height:23.5px;background:#fff;border-radius:0 0 4px 4px"></div>
  <div class="abs" style="left:87.5px;top:478px;width:4px;height:4px;background:radial-gradient(circle at 0 100%,#0a0a0a 3.6px,#fff 4.2px)"></div>
  <div class="abs" style="left:141.5px;top:478px;width:4px;height:4px;background:radial-gradient(circle at 100% 100%,#0a0a0a 3.6px,#fff 4.2px)"></div>
  <span class="t" style="left:98.7px;top:484.5px;font-size:11.5px;color:#111;letter-spacing:-0.25px;-webkit-text-stroke:0.3px #111" id="sheet1">Sheet1</span>
  <div class="abs" style="left:98.5px;top:497px;width:35.5px;height:2.2px;background:#1e8e4e;border-radius:1px"></div>
  <div class="abs" style="left:144px;top:484px;width:1px;height:14px;background:#5a5a5a"></div>
  <svg style="left:180px;top:486px" width="9" height="9" viewBox="0 0 9 9" stroke="#e0e0e0" stroke-width="1.1" stroke-linecap="round"><path d="M4.5 0.6V8.4M0.6 4.5H8.4"/></svg>
  <svg style="left:435px;top:487px" width="3" height="9" viewBox="0 0 3 9" fill="#e0e0e0"><circle cx="1.5" cy="1.2" r="0.9"/><circle cx="1.5" cy="4.5" r="0.9"/><circle cx="1.5" cy="7.8" r="0.9"/></svg>
  <div class="abs" style="left:451px;top:484px;width:258px;height:13.5px;border-radius:7px;background:#1c1c1c"></div>
  <svg style="left:454px;top:486.5px" width="7" height="9" viewBox="0 0 7 9" fill="#b0b0b0"><path d="M6 0.6V8.4L0.8 4.5Z"/></svg>
  <div class="abs" style="left:465px;top:487.3px;width:200px;height:7px;border-radius:3.5px;background:#9b9b9b"></div>
  <svg style="left:698px;top:486.5px" width="7" height="9" viewBox="0 0 7 9" fill="#b0b0b0"><path d="M1 0.6V8.4L6.2 4.5Z"/></svg>
</div>

<!-- ============ STATUS BAR ============ -->
<div id="status">
  <div class="abs" style="left:0;top:505px;width:720px;height:18px;background:#101010"></div>
  <div class="abs" style="left:0;top:504.5px;width:720px;height:1px;background:#1e1e1e"></div>
  <span class="t st" style="left:8.6px;top:510px;transform:scaleX(0.815)" id="ready">Ready</span>
  <svg style="left:47.5px;top:508.5px" width="13" height="12" viewBox="0 0 13 12" fill="none" stroke="#f0f0f0" stroke-width="1.1"><path d="M5 10.6H0.7V0.7H11.6V4"/><path d="M0.7 2.9H11.6" stroke-width="1.6"/><path d="M2.4 5.4H4.8M2.4 7.8H4.2" stroke-width="0.9"/><circle cx="8.9" cy="7.8" r="3.3"/><circle cx="8.9" cy="7.8" r="1.5" fill="#f0f0f0" stroke="none"/></svg>
  <svg style="left:74px;top:508px" width="13" height="13" viewBox="0 0 13 13" fill="none" stroke="#f0f0f0" stroke-width="1.1" stroke-linecap="round" stroke-linejoin="round">
    <circle cx="5" cy="1.9" r="1.3"/>
    <path d="M0.8 3.4L3.4 4.8H6.6L9.2 3.4M3.4 4.8V8L1.8 11.6M6.6 4.8V7.4"/>
    <path d="M6.2 9.6L8.2 11.6L12.2 7.2"/>
  </svg>
  <span class="t st" style="left:89.5px;top:510px;letter-spacing:-0.42px;transform:scaleX(0.985)" id="acc">Accessibility: Good to go</span>
  <div class="abs" style="left:463.5px;top:505px;width:32.5px;height:18px;background:#2d2d2d"></div>
  <svg style="left:474px;top:508.5px" width="12" height="11" viewBox="0 0 12 11" fill="none" stroke="#f0f0f0" stroke-width="1"><rect x="0.6" y="0.6" width="10.8" height="9.8" rx="0.6"/><path d="M4.2 0.6V10.4M7.8 0.6V10.4M0.6 3.9H11.4M0.6 7.2H11.4"/></svg>
  <svg style="left:508px;top:508.5px" width="12" height="11" viewBox="0 0 12 11" fill="none" stroke="#e0e0e0" stroke-width="1"><rect x="0.6" y="0.6" width="10.8" height="9.8" rx="0.8"/><rect x="3.4" y="2.8" width="5.2" height="5.4"/><path d="M4.8 4.4H7.2M4.8 6.2H7.2" stroke-width="0.7"/></svg>
  <svg style="left:541px;top:508.5px" width="13" height="11" viewBox="0 0 13 11" fill="none" stroke="#e0e0e0" stroke-width="1"><rect x="0.6" y="0.6" width="11.8" height="9.8" rx="0.8"/><path d="M4.2 0.6V5.6H9V0.6" stroke-width="1.1"/></svg>
  <div class="abs" style="left:569.5px;top:514.5px;width:5.5px;height:1px;background:#d0d0d0"></div>
  <div class="abs" style="left:581px;top:514.5px;width:83px;height:1px;background:#d0d0d0"></div>
  <div class="abs" style="left:620px;top:509px;width:4.5px;height:10.5px;background:#c8c8c8;border-radius:1px"></div>
  <svg style="left:668.5px;top:511.5px" width="7" height="7" viewBox="0 0 7 7" stroke="#d0d0d0" stroke-width="1"><path d="M3.5 0.4V6.6M0.4 3.5H6.6"/></svg>
  <span class="t st" style="left:686px;top:510px;letter-spacing:-0.2px;transform:scaleX(0.918)" id="zoom">100%</span>
</div>

</body>
</html>
